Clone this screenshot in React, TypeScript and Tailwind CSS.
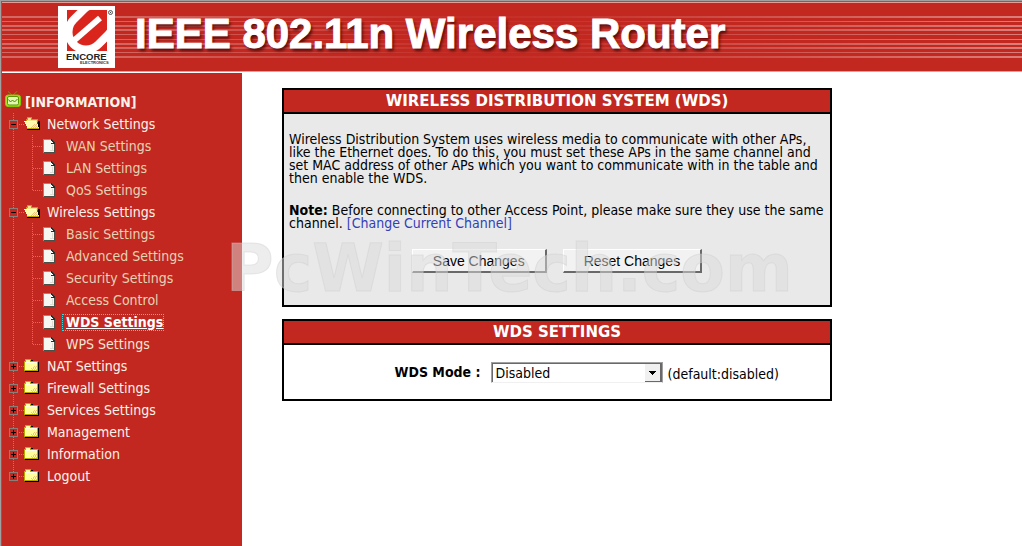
import React, { useState } from 'react';

type Item = { label: string; children?: string[] };

const MENU: Item[] = [
  { label: 'Network Settings', children: ['WAN Settings', 'LAN Settings', 'QoS Settings'] },
  {
    label: 'Wireless Settings',
    children: [
      'Basic Settings',
      'Advanced Settings',
      'Security Settings',
      'Access Control',
      'WDS Settings',
      'WPS Settings',
    ],
  },
  { label: 'NAT Settings' },
  { label: 'Firewall Settings' },
  { label: 'Services Settings' },
  { label: 'Management' },
  { label: 'Information' },
  { label: 'Logout' },
];

// y offset and thickness of each stripe in the banner
const STRIPES = [
  [16, 2], [21, 1], [25, 2], [29, 2], [34, 1], [39, 1], [43, 2], [47, 2], [52, 1], [56, 2],
];

function Stripes() {
  return (
    <svg className="absolute inset-x-0 -top-[3px] h-[72px] w-full" aria-hidden="true" shapeRendering="crispEdges">
      <defs>
        <linearGradient id="fade" gradientUnits="userSpaceOnUse" x1="0" x2="1020" y1="0" y2="0">
          <stop offset="0" stopColor="#fff" stopOpacity="0.3" />
          <stop offset="0.1" stopColor="#fff" stopOpacity="0.3" />
          <stop offset="0.45" stopColor="#fff" stopOpacity="0.03" />
          <stop offset="0.55" stopColor="#fff" stopOpacity="0.05" />
          <stop offset="1" stopColor="#fff" stopOpacity="0.4" />
        </linearGradient>
      </defs>
      {STRIPES.map(([y, h]) => (
        <rect key={y} x="0" y={y} width="100%" height={h} fill="url(#fade)" />
      ))}
    </svg>
  );
}

function Logo() {
  return (
    <svg className="relative h-[62px] w-[57px] shrink-0" viewBox="0 0 57 62" role="img" aria-label="Encore Electronics">
      <rect width="57" height="62" fill="#fff" />
      <clipPath id="mark">
        <rect x="9" y="4" width="40" height="41" />
      </clipPath>
      <g clipPath="url(#mark)" fill="none">
        <rect x="9" y="4" width="40" height="41" fill="#da251c" />
        <path d="M28 26 L62 -8" stroke="#fff" strokeWidth="43" strokeLinecap="round" />
        <path d="M28 26 L38 16" stroke="#da251c" strokeWidth="27" strokeLinecap="round" />
        <path d="M33 4 H49 V20 L36 20 Z" fill="#da251c" />
        <path d="M12 38 L42 12" stroke="#fff" strokeWidth="6" />
      </g>
      <circle cx="52.5" cy="6.500" r="2" fill="none" stroke="#444" strokeWidth="0.9" />
      <circle cx="52.5" cy="6.500" r="0.7" fill="#444" />
      <text x="8" y="54" fontFamily="Liberation Sans" fontWeight="700" fontSize="9.5" fill="#222">ENCORE</text>
      <text x="22" y="58" fontFamily="Liberation Sans" fontWeight="700" fontSize="4" fill="#333">ELECTRONICS</text>
    </svg>
  );
}

function TvIcon() {
  return (
    <svg className="h-[17px] w-[17px]" viewBox="0 0 17 17" aria-hidden="true">
      <path d="M3 0.500L7.500 4.500L12.500 0" fill="none" stroke="#6a9a00" />
      <rect x="0.500" y="4" width="15" height="11.500" rx="2.500" fill="#a6e22e" stroke="#86c800" />
      <rect x="2.500" y="5.500" width="11" height="8.500" rx="1.500" fill="#e2f8ae" stroke="#5a9400" />
      <path d="M3.500 8.500L5.500 11L7.500 9L9.500 11L12.500 8" fill="none" stroke="#4d8a00" />
    </svg>
  );
}

const DOTS = { stroke: '#8e8a86', strokeDasharray: '1 1' };

function FolderBranch({ open, last }: { open: boolean; last: boolean }) {
  return (
    <svg className="h-[22px] w-[45px] shrink-0" viewBox="0 0 45 22" aria-hidden="true" shapeRendering="crispEdges">
      <path d={last ? 'M11.500 0V7' : 'M11.500 0V7M11.500 16V22'} {...DOTS} />
      <path d="M17 11.500H22" {...DOTS} />
      <rect x="7.500" y="7.500" width="8" height="8" fill="none" stroke="#84807c" />
      <path d={open ? 'M9 11.500H14' : 'M9 11.500H14M11.500 9V14'} stroke="#000" />
      {open ? (
        <g>
          <path d="M25 17H38V8H36V16H25Z" fill="#000" />
          <path d="M24 6H25V5H29V6H35V15H25Z" fill="#f2e58a" />
          <path d="M24.500 9V6.500H25.500V4.500H29.500V6.500H35.500V9" fill="none" stroke="#b0a000" />
          <path d="M22 8H34V9H35V11H36V14H37V16H25V13H24V11H23V9H22Z" fill="#fffbae" />
          <path d="M22 8.500H34" stroke="#fffff0" />
          <path d="M25 15.500H37" stroke="#b8a800" />
          <path d="M29 14.500H36M30 13.500H36M31 12.500H35M32 11.500H35" stroke="#f3c27c" strokeDasharray="1 1" />
        </g>
      ) : (
        <g>
          <path d="M23 17H37V7H36V16H23ZM29 5H31V6H29Z" fill="#000" />
          <path d="M22.500 15.500V6.500H23.500V4.500H28.500V6.500H35.500V15.500Z" fill="#ffff9c" stroke="#b5a800" />
          <path d="M23 7.500H35" stroke="#ffffe8" />
          <path d="M30 14.500H35M29 13.500H35M32 11.500H35M31 12.500H35" stroke="#f0c878" strokeDasharray="1 1" />
        </g>
      )}
    </svg>
  );
}

function PageBranch({ last, lineOn }: { last: boolean; lineOn: boolean }) {
  return (
    <svg className="h-[22px] w-[60px] shrink-0" viewBox="0 0 60 22" aria-hidden="true" shapeRendering="crispEdges">
      {lineOn && <path d="M11.500 0V22" {...DOTS} />}
      <path d={last ? 'M30.500 0V11' : 'M30.500 0V22'} {...DOTS} />
      <path d="M31 11.500H41" {...DOTS} />
      <path d="M42 5H50L53 8V18H42Z" fill="#f6f6f2" />
      <path d="M41.500 18V4.500H49" fill="none" stroke="#8c8c84" />
      <path d="M42 17.500H53M52.500 8V18" fill="none" stroke="#4a5048" />
      <path d="M49 4H50V5H51V6H52V7H53V9H49Z" fill="#2b2b28" />
      <path d="M49 6H50V7H51V8H49Z" fill="#fff" />
      <path d="M50 10V16M48 15.500H52" stroke="#dcdcd4" />
    </svg>
  );
}

function Sidebar() {
  return (
    <nav className="w-60 shrink-0 bg-[#c22820] pt-[18px] leading-[22px] text-[#fbf3ea]">
      <div className="flex h-[22px] gap-[3px] pl-[3px] font-bold">
        <TvIcon />
        <a href="#info">[INFORMATION]</a>
      </div>
      <ul>
        {MENU.map((item, i) => (
          <li key={item.label}>
            <div className="flex h-[22px]">
              <FolderBranch open={!!item.children} last={i === MENU.length - 1} />
              <a href="#menu">{item.label}</a>
            </div>
            {item.children && (
              <ul>
                {item.children.map((child, n) => (
                  <li key={child} className="flex h-[22px]">
                    <PageBranch last={n === item.children!.length - 1} lineOn={i < MENU.length - 1} />
                    {child === 'WDS Settings' ? (
                      <a
                        href="#wds"
                        className="self-center border border-dotted border-[#3dd7df] pl-[3px] leading-[15px] font-bold text-white underline"
                      >
                        {child}
                      </a>
                    ) : (
                      <a
                        href="#page"
                        className={child === 'WPS Settings' ? 'pl-1 text-[#f3e6d6]' : 'pl-1 text-[#e6d3b4]'}
                      >
                        {child}
                      </a>
                    )}
                  </li>
                ))}
              </ul>
            )}
          </li>
        ))}
      </ul>
    </nav>
  );
}

function Panel({ title, children, className }: { title: string; children: React.ReactNode; className: string }) {
  return (
    <section className="border-2 border-black">
      <h2 className="border-b-2 border-black bg-[#c22820] text-center font-['DejaVu_Sans',sans-serif] text-[15px] leading-[22px] font-bold text-white">
        {title}
      </h2>
      <div className={className}>{children}</div>
    </section>
  );
}

const BUTTON =
  'h-6 border-t border-l border-r-2 border-b-2 border-t-white border-l-white border-r-[#696969] border-b-[#696969] bg-[#f2f2f2] px-5 font-["Liberation_Sans"] leading-[20px]';

export default function App() {
  const [mode, setMode] = useState('Disabled');

  return (
    <div className="flex min-h-screen flex-col border-t border-l border-[#a0a0a0] bg-white font-['DejaVu_Sans_Condensed','DejaVu_Sans',sans-serif] text-[14px] text-black">
      <div className="flex grow flex-col border-t border-l border-[#696969]">
        <header className="relative flex h-[70px] items-center gap-5 border-y border-[#e89a94] bg-[#c22820] pl-14">
          <Stripes />
          <Logo />
          <h1 className="relative pb-1.5 font-['Liberation_Sans',sans-serif] text-[42px] leading-none font-bold whitespace-nowrap text-white [-webkit-text-stroke:1px_white] [text-shadow:2px_3px_3px_rgba(60,0,0,0.75)]">
            IEEE 802.11n Wireless Router
          </h1>
        </header>

        <div className="mt-px flex grow">
          <Sidebar />
          <main className="relative grow pt-[15px] pl-10">
            <div className="flex max-w-[550px] flex-col gap-3">
              <Panel
                title="WIRELESS DISTRIBUTION SYSTEM (WDS)"
                className="bg-[#e9e9e9] px-[5px] pt-[19px] pb-8 leading-[13px]"
              >
                <p>
                  Wireless Distribution System uses wireless media to communicate with other APs, like the Ethernet
                  does. To do this, you must set these APs in the same channel and set MAC address of other APs which
                  you want to communicate with in the table and then enable the WDS.
                </p>
                <p className="mt-[19px]">
                  <b>Note:</b> Before connecting to other Access Point, please make sure they use the same channel.{' '}
                  <a href="#channel" className="text-[#3340b8]">[Change Current Channel]</a>
                </p>
                <div className="mt-[19px] flex justify-center gap-4">
                  <button type="button" className={BUTTON}>Save Changes</button>
                  <button type="button" className={BUTTON} onClick={() => setMode('Disabled')}>Reset Changes</button>
                </div>
              </Panel>

              <Panel title="WDS SETTINGS" className="flex items-center bg-white pt-[17px] pb-4">
                <label htmlFor="mode" className="w-[36%] text-right leading-[21px] font-bold">WDS Mode :</label>
                <div className="relative ml-[10px] border border-[#a0a0a0] border-b-[#f0f0f0]">
                  <select
                    id="mode"
                    value={mode}
                    onChange={(e) => setMode(e.target.value)}
                    className="block h-[19px] w-[170px] appearance-none border-t border-l border-[#696969] bg-white pl-[3px] leading-[18px] outline-none"
                  >
                    <option>Disabled</option>
                    <option>Enabled</option>
                  </select>
                  <span className="pointer-events-none absolute top-px right-0 flex h-[18px] w-[17px] items-center justify-center border-r-2 border-b border-[#696969] bg-[#f0f0f0]">
                    <svg className="h-1 w-[7px]" viewBox="0 0 7 4" shapeRendering="crispEdges" aria-hidden="true">
                      <path d="M0 0H7L3.500 4Z" />
                    </svg>
                  </span>
                </div>
                <span className="ml-[5px] pt-1 leading-[17px]">(default:disabled)</span>
              </Panel>
            </div>

            <div className="pointer-events-none absolute top-[154px] -left-4 font-['DejaVu_Sans',sans-serif] text-[65px] leading-[84px] font-bold text-[#dcdcdc]/50 [-webkit-text-stroke:1px_rgba(205,205,205,0.4)]">
              PcWinTech.com
            </div>
          </main>
        </div>
      </div>
    </div>
  );
}
